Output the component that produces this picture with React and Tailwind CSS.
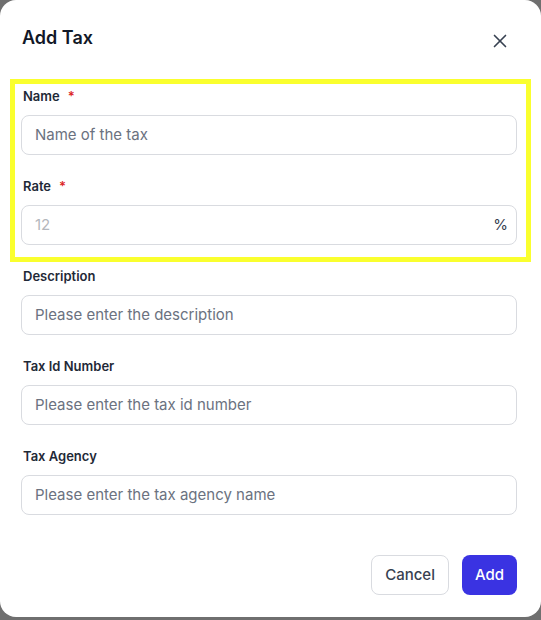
import { X } from 'lucide-react';

const fields = [
  { label: 'Name', placeholder: 'Name of the tax', required: true },
  { label: 'Rate', placeholder: '12', required: true, suffix: '%' },
  { label: 'Description', placeholder: 'Please enter the description' },
  { label: 'Tax Id Number', placeholder: 'Please enter the tax id number' },
  { label: 'Tax Agency', placeholder: 'Please enter the tax agency name' },
];

function Field({ label, placeholder, required, suffix }) {
  return (
    <div className="flex flex-col">
      <label className="h-5 pl-[2px] text-[13px] leading-5 font-semibold text-[#1f2937]">
        {label}
        {required && <span className="ml-[8px] text-[#dc2626]">*</span>}
      </label>
      <div className="mt-[9px] flex h-10 items-center rounded-lg border border-[#d9dbe0] bg-white pl-[13px] pr-[8px]">
        <input
          className={`w-full bg-transparent text-[15px] outline-none ${suffix ? 'placeholder:text-[#b4b7bd]' : 'placeholder:text-[#6b7280]'}`}
          placeholder={placeholder}
        />
        {suffix && <span className="text-[15px] text-[#374151]">{suffix}</span>}
      </div>
    </div>
  );
}

export default function App() {
  return (
    <div className="h-[620px] w-[541px] bg-[#6f6f6f]" style={{ fontFamily: 'Inter, "Noto Sans", sans-serif' }}>
      <div className="flex h-[617px] flex-col rounded-[16px] bg-white pl-[21px] pr-[24px]">
        <div className="flex items-center justify-between pt-[24px]">
          <h2 className="pl-[1px] text-[18px] leading-7 font-semibold text-[#111827]">Add Tax</h2>
          <button className="mr-[6px] mt-[6px] text-[#374151]">
            <X className="h-[22px] w-[22px]" strokeWidth={1.8} />
          </button>
        </div>

        <div className="relative mt-[34px] flex flex-col gap-[21px]">
          <div className="pointer-events-none absolute -left-[11px] -right-[14px] -top-[7px] h-[183px] border-[5px] border-[#faff2e]" />
          {fields.map((f) => (
            <Field key={f.label} {...f} />
          ))}
        </div>

        <div className="mt-[40px] flex justify-end gap-[13px]">
          <button className="h-10 rounded-lg border border-[#d9dbe0] bg-white px-[13px] text-[15px] font-medium text-[#374151]">
            Cancel
          </button>
          <button className="h-10 rounded-lg bg-[#3a33e2] px-[13px] text-[15px] font-medium text-white">
            Add
          </button>
        </div>
      </div>
    </div>
  );
}
